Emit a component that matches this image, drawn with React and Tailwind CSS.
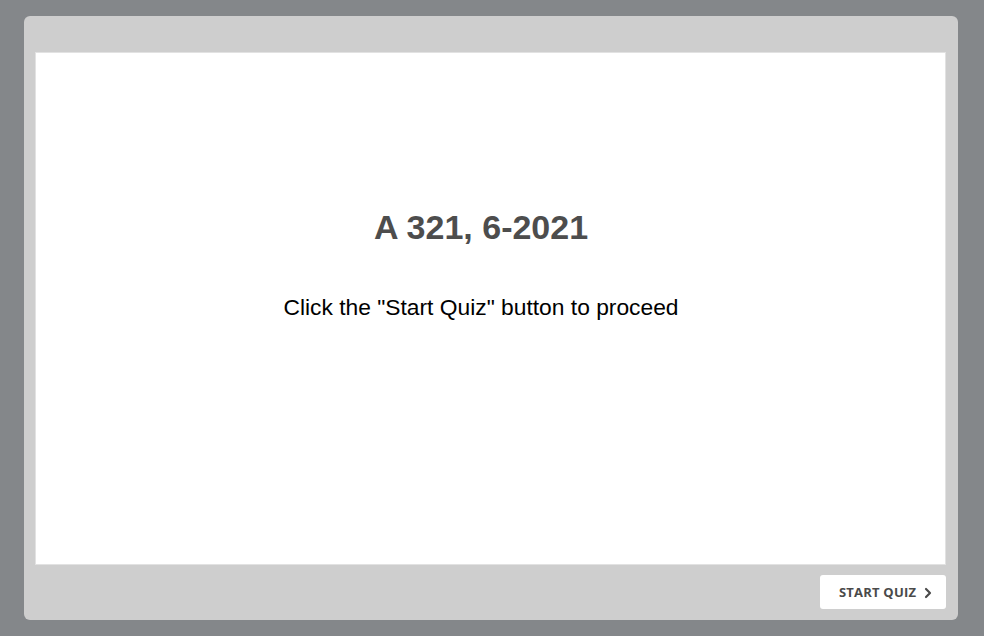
import { ChevronRight } from "lucide-react";

export default function App() {
  return (
    <div className="w-[984px] h-[636px] bg-[#84878a] pt-[16px] pb-[16px] pl-[24px] pr-[26px]">
      <div className="h-full bg-[#cecece] rounded-[6px] pt-[36px] pl-[11px] pr-[12px] flex flex-col">
        <div className="h-[513px] bg-white border border-[#e2e2e2] flex flex-col items-center pr-[19px] font-['Liberation_Sans',Arial,sans-serif]">
          <h1 className="mt-[154px] text-[34px] leading-[40px] font-bold text-[#4d4d4d]">A 321, 6-2021</h1>
          <p className="mt-[46px] text-[22.8px] leading-[28px] text-black">Click the "Start Quiz" button to proceed</p>
        </div>
        <div className="flex justify-end pt-[10px]">
          <button className="w-[126px] h-[34px] bg-white rounded-[3px] flex items-center pl-[19px] pt-[1px] gap-[4px] font-['Open_Sans',sans-serif] font-bold text-[13px] tracking-[0.2px] text-[#4a4a4a]">
            START QUIZ
            <ChevronRight className="w-[16px] h-[16px]" strokeWidth={3.2} />
          </button>
        </div>
      </div>
    </div>
  );
}
